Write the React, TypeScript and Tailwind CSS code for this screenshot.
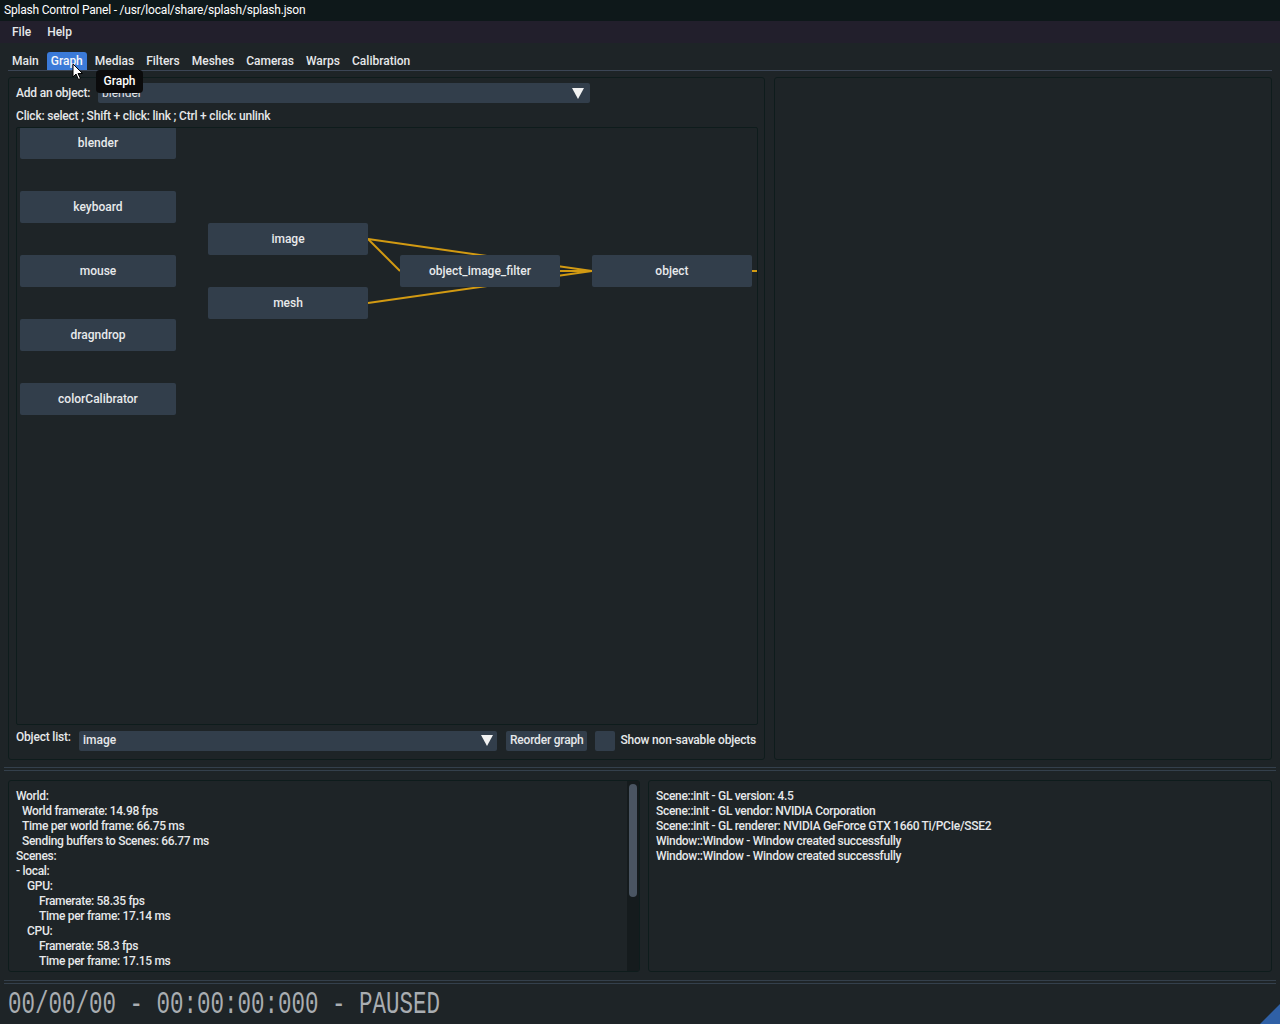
import React from "react";

const nodes = [
  { label: "blender", x: 3, y: -1, w: 156 },
  { label: "keyboard", x: 3, y: 63, w: 156 },
  { label: "mouse", x: 3, y: 127, w: 156 },
  { label: "dragndrop", x: 3, y: 191, w: 156 },
  { label: "colorCalibrator", x: 3, y: 255, w: 156 },
  { label: "image", x: 191, y: 95, w: 160 },
  { label: "mesh", x: 191, y: 159, w: 160 },
  { label: "object_image_filter", x: 383, y: 127, w: 160 },
  { label: "object", x: 575, y: 127, w: 160 },
];

const tabs = ["Main", "Graph", "Medias", "Filters", "Meshes", "Cameras", "Warps", "Calibration"];

const stats: [number, string][] = [
  [0, "World:"],
  [6, "World framerate: 14.98 fps"],
  [6, "Time per world frame: 66.75 ms"],
  [6, "Sending buffers to Scenes: 66.77 ms"],
  [0, "Scenes:"],
  [0, "- local:"],
  [11, "GPU:"],
  [23, "Framerate: 58.35 fps"],
  [23, "Time per frame: 17.14 ms"],
  [11, "CPU:"],
  [23, "Framerate: 58.3 fps"],
  [23, "Time per frame: 17.15 ms"],
];

const logs = [
  "Scene::init - GL version: 4.5",
  "Scene::init - GL vendor: NVIDIA Corporation",
  "Scene::init - GL renderer: NVIDIA GeForce GTX 1660 Ti/PCIe/SSE2",
  "Window::Window - Window created successfully",
  "Window::Window - Window created successfully",
];

function Triangle() {
  return (
    <svg width="12" height="11" viewBox="0 0 12 11">
      <polygon points="0,0 12,0 6,11" fill="#f2f2f2" />
    </svg>
  );
}

export default function App() {
  return (
    <div
      className="relative w-[1280px] h-[1024px] overflow-hidden bg-[#1e2427] text-[12px] leading-[15px] text-[#e6e8ea] flex flex-col"
      style={{ fontFamily: "Roboto, 'Noto Sans', sans-serif" }}
    >
      {/* Title bar */}
      <div className="h-[21px] bg-[#0e181a] flex items-center px-[4px] text-white shrink-0 tracking-[-0.2px]">
        Splash Control Panel - /usr/local/share/splash/splash.json
      </div>
      {/* Menu bar */}
      <div className="h-[22px] bg-[#221f2c] flex items-center pl-[12px] gap-[16px] font-medium shrink-0">
        <span>File</span>
        <span>Help</span>
      </div>

      {/* Tabs */}
      <div className="mx-[8px] mt-[9px] h-[19px] border-b border-[#3b4555] flex items-end gap-[4px] shrink-0 font-medium">
        {tabs.map((t, i) => (
          <div
            key={t}
            className={
              "h-[18px] px-[4px] flex items-center rounded-t-[3px] " +
              (i === 1 ? "bg-[#3b7ad8] text-[#f4f6fa]" : "")
            }
          >
            {t}
          </div>
        ))}
      </div>

      {/* Main panels */}
      <div className="mt-[6px] mx-[8px] h-[683px] flex gap-[9px] shrink-0">
        <div className="w-[757px] h-full rounded-[3px] border border-[#0e1c1c] flex flex-col px-[7px] pt-[5px]">
          <div className="flex items-center h-[20px]">
            <span className="w-[82px] font-medium tracking-[-0.2px]">Add an object:</span>
            <div className="w-[492px] h-[20px] bg-[#323e4b] rounded-[2px] flex items-center justify-between pl-[4px] pr-[6px]">
              <span className="text-[#e6e8ea]">blender</span>
              <Triangle />
            </div>
          </div>
          <div className="mt-[6px] h-[14px] flex items-center font-medium tracking-[-0.2px]">
            Click: select ; Shift + click: link ; Ctrl + click: unlink
          </div>
          <div className="mt-[4px] w-[742px] h-[598px] border border-[#0e1c1c] rounded-[2px] relative overflow-hidden">
            <svg className="absolute left-0 top-0" width="742" height="598">
              <g stroke="#d29a12" strokeWidth="2" fill="none">
                <line x1="351" y1="111" x2="383" y2="143" />
                <line x1="351" y1="111" x2="575" y2="143" />
                <line x1="351" y1="175" x2="575" y2="143" />
                <line x1="543" y1="143" x2="575" y2="143" />
                <line x1="735" y1="143" x2="760" y2="143" />
              </g>
            </svg>
            {nodes.map((n) => (
              <div
                key={n.label}
                className="absolute h-[32px] bg-[#323e4b] rounded-[2px] flex items-center justify-center font-medium text-[#e8eaec]"
                style={{ left: n.x, top: n.y, width: n.w }}
              >
                {n.label}
              </div>
            ))}
          </div>
          <div className="mt-[5px] flex items-center h-[21px] whitespace-nowrap">
            <span className="w-[63px] shrink-0 font-medium -mt-[6px] tracking-[-0.2px]">Object list:</span>
            <div className="w-[418px] shrink-0 h-[20px] bg-[#323e4b] rounded-[2px] flex items-center justify-between pl-[4px] pr-[4px]">
              <span className="font-medium">image</span>
              <Triangle />
            </div>
            <div className="ml-[9px] shrink-0 h-[20px] px-[4px] bg-[#323e4b] rounded-[2px] flex items-center font-medium tracking-[-0.2px]">
              Reorder graph
            </div>
            <div className="ml-[8px] shrink-0 w-[20px] h-[20px] bg-[#323e4b] rounded-[2px]" />
            <span className="ml-[5px] shrink-0 font-medium tracking-[-0.2px]">Show non-savable objects</span>
          </div>
        </div>
        <div className="w-[498px] h-full rounded-[3px] border border-[#0e1c1c]" />
      </div>

      {/* Separator */}
      <div className="mt-[7px] mx-[4px] h-[4px] border-t border-b border-[#34404c] shrink-0" />

      {/* Bottom panels */}
      <div className="mt-[9px] mx-[8px] h-[192px] flex gap-[8px] shrink-0">
        <div className="relative w-[632px] h-full rounded-[3px] border border-[#0e1c1c] pl-[7px] pt-[8px] font-medium">
          {stats.map(([ind, t], i) => (
            <div key={i} className="h-[15px] leading-[15px] tracking-[-0.3px]" style={{ paddingLeft: ind }}>
              {t}
            </div>
          ))}
          <div className="absolute right-0 top-0 w-[12px] h-full bg-[#151b1d]">
            <div className="mx-[2px] mt-[3px] h-[113px] rounded-[4px] bg-[#4a5562]" />
          </div>
        </div>
        <div className="w-[624px] h-full rounded-[3px] border border-[#0e1c1c] pl-[7px] pt-[8px] font-medium">
          {logs.map((t, i) => (
            <div key={i} className="h-[15px] leading-[15px] tracking-[-0.3px]">
              {t}
            </div>
          ))}
        </div>
      </div>

      {/* Separator */}
      <div className="mt-[8px] mx-[4px] h-[4px] border-t border-b border-[#34404c] shrink-0" />

      {/* Timecode */}
      <div className="mt-[7px] pl-[8px] h-[28px] flex items-center shrink-0">
        <span
          className="text-[22.5px] text-[#a9adb1] scale-y-[1.4] origin-center whitespace-pre"
          style={{ fontFamily: "'Liberation Mono', 'DejaVu Sans Mono', monospace" }}
        >
          00/00/00 - 00:00:00:000 - PAUSED
        </span>
      </div>

      {/* Tooltip */}
      <div className="absolute left-[96px] top-[70px] w-[47px] h-[23px] bg-[#0b0b0c] rounded-[4px] flex items-center justify-center font-medium text-white">
        Graph
      </div>

      {/* Cursor */}
      <svg className="absolute left-[72px] top-[63px]" width="12" height="18" viewBox="0 0 12 18">
        <path d="M1 1 L1 14 L4 11 L6.5 16.5 L8.5 15.5 L6 10.5 L10.5 10.5 Z" fill="#ffffff" stroke="#000000" strokeWidth="1" />
      </svg>

      {/* Resize grip */}
      <svg className="absolute right-0 bottom-0" width="20" height="20" viewBox="0 0 20 20">
        <polygon points="20,0 20,20 0,20" fill="#2f60a6" />
      </svg>
    </div>
  );
}
